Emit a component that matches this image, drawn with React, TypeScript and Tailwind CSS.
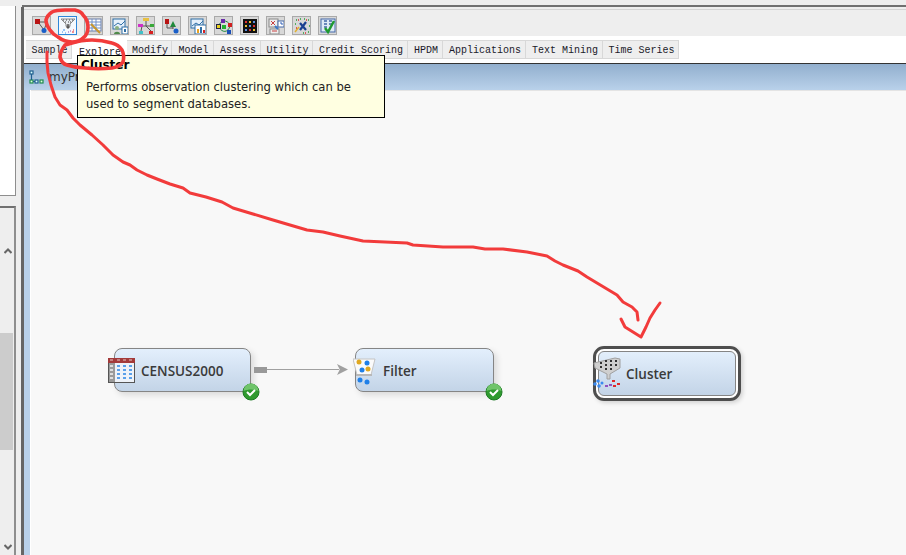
import React from 'react';

const tabs = [
  { label: 'Sample', w: 'w-[46px]' },
  { label: 'Explore', w: 'w-[55px]', active: true },
  { label: 'Modify', w: 'w-[45px]' },
  { label: 'Model', w: 'w-[42px]' },
  { label: 'Assess', w: 'w-[47px]' },
  { label: 'Utility', w: 'w-[52px]' },
  { label: 'Credit Scoring', w: 'w-[95px]' },
  { label: 'HPDM', w: 'w-[35px]' },
  { label: 'Applications', w: 'w-[83px]' },
  { label: 'Text Mining', w: 'w-[77px]' },
  { label: 'Time Series', w: 'w-[76px]' },
];

const toolIcons: React.ReactNode[] = [
  <>
    <path d="M4 4L13 4M4 4L10 12M13 4L10 12" stroke="#555" fill="none" />
    <rect x="1" y="1" width="5" height="5" fill="#b81414" />
    <path d="M11 1l3 3-3 2z" fill="#2a9a2a" />
    <circle cx="10" cy="12.5" r="2.5" fill="#1a5fc8" />
  </>,
  <>
    <path d="M1 1h14l-5 5v2H6V6z" fill="#e8edf2" stroke="#8a8a8a" />
    <path d="M3 2h1M6 2h1M9 2h1M12 2h1M5 4h1M8 4h1M10 4h1" stroke="#444" />
    <path d="M8 6v4" stroke="#555" strokeWidth="1.5" />
    <path d="M5.5 8.5L8 11l2.5-2.5z" fill="#555" />
    <path d="M2 14h1M4 12h1M5 15h1M3 12h1" stroke="#3f8fe8" strokeWidth="1.2" />
    <path d="M8 14h1M10 13h1" stroke="#8a4cc0" strokeWidth="1.2" />
    <path d="M12 14h2M13 12h1" stroke="#e22" strokeWidth="1.2" />
  </>,
  <>
    <rect x="2" y="1" width="13" height="12" fill="#fff" stroke="#6a7fa8" />
    <path d="M2 4h13M2 7h13M2 10h13M6 1v12M10 1v12" stroke="#6f8fc8" />
    <path d="M5 6l9 9" stroke="#c9962b" strokeWidth="2" />
  </>,
  <>
    <rect x="1" y="1" width="12" height="10" fill="#e6f0fa" stroke="#2f6ea5" />
    <path d="M2 8l4-3 3 2 4-4" stroke="#2f6ea5" fill="none" />
    <circle cx="5" cy="10" r="2" fill="#8ab080" />
    <path d="M2 16c0-3 6-3 6 0z" fill="#4f8a4a" />
    <rect x="10" y="9" width="6" height="7" fill="#fff" stroke="#2f6ea5" />
    <rect x="12" y="11" width="2" height="3" fill="#2f6ea5" />
  </>,
  <>
    <path d="M8 3v5M3 8h10M4 8l-1 5M8 8l5 5" stroke="#555" fill="none" />
    <rect x="5" y="0" width="6" height="3" fill="#e8c040" />
    <rect x="0" y="6" width="5" height="3" fill="#d030c8" />
    <rect x="12" y="6" width="4" height="3" fill="#38a838" />
    <rect x="1" y="13" width="4" height="3" fill="#40c0c8" />
    <rect x="11" y="13" width="4" height="3" fill="#d82020" />
  </>,
  <>
    <path d="M3 5v5h6" stroke="#555" fill="none" />
    <rect x="1" y="1" width="4" height="5" fill="#b81414" />
    <path d="M9 3l3 6H6z" fill="#1f8a3a" />
    <path d="M9 8v3" stroke="#555" />
    <circle cx="12" cy="13" r="2.5" fill="#1a5fc8" />
  </>,
  <>
    <rect x="1" y="1" width="12" height="9" fill="#e6f0fa" stroke="#2f6ea5" />
    <path d="M2 8l4-3 3 2 4-4" stroke="#2f6ea5" fill="none" />
    <rect x="5" y="7" width="11" height="9" fill="#fff" stroke="#2f6ea5" />
    <rect x="7" y="11" width="2" height="4" fill="#e8a020" />
    <rect x="10" y="9" width="2" height="6" fill="#2f6ea5" />
    <rect x="13" y="12" width="2" height="3" fill="#d82020" />
  </>,
  <>
    <path d="M3 8C4 2 11 1 14 7M3 9c3 6 9 6 11-1" stroke="#1f8a3a" fill="none" />
    <rect x="0.5" y="6.5" width="4" height="4" fill="#e8d020" stroke="#224" />
    <rect x="5" y="1" width="4" height="4" fill="#6a2ca8" />
    <rect x="6" y="7" width="4" height="4" fill="#22b030" />
    <rect x="12" y="5" width="4" height="4" fill="#d02020" />
    <rect x="11" y="12" width="4" height="4" fill="#1a4fb8" />
  </>,
  <>
    <rect x="1" y="1" width="14" height="14" fill="#111" />
    <path d="M3 3h2v2H3zM11 7h2v2h-2zM7 11h2v2H7z" fill="#e03030" />
    <path d="M7 3h2v2H7zM3 7h2v2H3zM11 11h2v2h-2z" fill="#e8c030" />
    <path d="M11 3h2v2h-2zM7 7h2v2H7zM3 11h2v2H3z" fill="#5a90e0" />
  </>,
  <>
    <rect x="1" y="1" width="9" height="8" fill="#eee" stroke="#888" />
    <rect x="10" y="3" width="6" height="6" fill="#fff" stroke="#4468a8" />
    <rect x="2" y="11" width="9" height="5" fill="#eee" stroke="#888" />
    <path d="M3 3l4 4M7 3l-4 4M4 13h5" stroke="#c84040" />
    <path d="M12 5h2v2" stroke="#2f5fb8" fill="none" />
    <path d="M7 8l3 3" stroke="#3a78c8" strokeWidth="2" />
  </>,
  <>
    <path d="M6 5l6 7M12 4l-6 8" stroke="#1a3f90" strokeWidth="2.2" />
    <path d="M1 14l4-5" stroke="#e0b030" strokeWidth="1.5" />
    <path d="M2 2h1M6 1h1M10 1h1M14 2h1M1 6h1M15 8h1M14 14h1M9 15h1" stroke="#2a9a3a" strokeWidth="1.5" />
    <path d="M4 2h1M12 2h1M2 10h1M11 15h1" stroke="#d83030" strokeWidth="1.5" />
  </>,
  <>
    <rect x="1" y="1" width="14" height="13" fill="#dfe9f6" stroke="#4468a8" />
    <path d="M4 3h3M9 3h3M4 6h3M9 6h3M4 9h3" stroke="#4468a8" strokeWidth="1.5" />
    <path d="M5 10l3 4 6-11" stroke="#1f9a30" strokeWidth="2.5" fill="none" />
  </>,
];

function ToolButton({ icon, selected }: { icon: React.ReactNode; selected?: boolean }) {
  return (
    <div
      className={
        selected
          ? 'w-[19px] h-[19px] border border-[#2f86d8] bg-[#f4f9fe] flex items-center justify-center'
          : 'w-[19px] h-[19px] border border-[#a9a9a9] bg-[#d8d8d8] flex items-center justify-center'
      }
    >
      <svg width="16" height="16" viewBox="0 0 16 16">
        {icon}
      </svg>
    </div>
  );
}

function CheckBadge() {
  return (
    <svg width="18" height="18" viewBox="0 0 18 18" className="absolute right-[-10px] bottom-[-10px]">
      <circle cx="9" cy="9" r="8" fill="#2f9a2f" stroke="#1d7a24" />
      <path d="M1.5 8A7.5 7.5 0 0 1 16.5 8C12 6 6 6 1.5 8z" fill="#6fc46a" />
      <path d="M5 9l3 3 5-5" stroke="#fff" strokeWidth="2" fill="none" />
    </svg>
  );
}

function CensusIcon() {
  return (
    <svg width="28" height="26" viewBox="0 0 28 26" className="absolute left-[-7px] top-[9px]">
      <rect x="0.5" y="0.5" width="26" height="24" fill="#eef2f8" stroke="#555" />
      <rect x="0" y="0" width="27" height="5" fill="#a33a3a" />
      <path d="M2 2h3M9 2h3M15 2h3M21 2h3" stroke="#e8c8c8" />
      <rect x="1" y="5" width="6" height="19" fill="#9a9a9a" />
      <path d="M2 8h3M2 12h3M2 16h3M2 20h3" stroke="#ddd" strokeWidth="2" />
      <path d="M9 8h3M15 8h3M21 8h3M9 12h3M15 12h3M21 12h3M9 16h3M15 16h3M21 16h3M9 20h3M15 20h3M21 20h3" stroke="#5aa0ea" strokeWidth="2" />
    </svg>
  );
}

function FilterIcon() {
  return (
    <svg width="24" height="28" viewBox="0 0 24 28" className="absolute left-[-3px] top-[9px]">
      <path d="M0 1h22l-4 16H4z" fill="#fbfbfb" stroke="#c4c4c4" />
      <rect x="3" y="16" width="16" height="2" fill="#b8b8b8" />
      <circle cx="6" cy="4" r="2.5" fill="#e0a820" />
      <circle cx="14" cy="5" r="2.5" fill="#2080e8" />
      <circle cx="9" cy="12" r="2.5" fill="#2080e8" />
      <circle cx="15" cy="11" r="2.5" fill="#e0a820" />
      <circle cx="7" cy="22" r="2.5" fill="#2080e8" />
      <circle cx="14" cy="24" r="2.5" fill="#2080e8" />
    </svg>
  );
}

function ClusterIcon() {
  return (
    <svg width="32" height="34" viewBox="0 0 32 34" className="absolute left-[-6px] top-[4px]">
      <path d="M1 7L22 2l5 1v9l-10 6v5h-3v-5L2 12z" fill="#cfcfcf" stroke="#a0a0a0" />
      <path d="M7 7h2M12 5h2M17 5h2M22 5h2M7 11h2M12 9h2M17 9h2M22 9h2M12 13h2M17 13h2" stroke="#333" strokeWidth="2" />
      <circle cx="2" cy="28" r="1.8" fill="#3a8af0" />
      <circle cx="5" cy="25" r="1.8" fill="#3a8af0" />
      <circle cx="6" cy="30" r="1.8" fill="#3a8af0" />
      <circle cx="9" cy="27" r="1.5" fill="#3a8af0" />
      <path d="M12 30h3M16 29h3" stroke="#9050c0" strokeWidth="2" />
      <path d="M19 25h3M24 28h3M20 30h3" stroke="#e02828" strokeWidth="2" />
    </svg>
  );
}

export default function App() {
  return (
    <div className="relative w-[906px] h-[555px] overflow-hidden flex bg-[#eeeeee] font-['DejaVu_Sans',sans-serif]">
      {/* left docked panels, cut off by the crop */}
      <aside className="w-[21px] shrink-0 pr-[5px] pt-[6px] flex flex-col">
        <div className="h-[190px] bg-white border-r border-b border-[#8e8e8e]" />
        <div className="mt-[10px] flex-1 border-t-2 border-r-2 border-t-[#707070] border-r-[#8e8e8e] flex flex-col pr-px">
          <div className="h-[125px] flex items-end justify-end pr-[1px] pb-[79px]">
            <svg width="8" height="6" viewBox="0 0 8 6">
              <path d="M0.5 5L4 1.5 7.5 5" stroke="#666" strokeWidth="2" fill="none" />
            </svg>
          </div>
          <div className="h-[117px] bg-[#cccccc]" />
          <div className="flex-1 flex items-end justify-end pr-[1px] pb-[5px]">
            <svg width="8" height="6" viewBox="0 0 8 6">
              <path d="M0.5 1L4 4.5 7.5 1" stroke="#666" strokeWidth="2" fill="none" />
            </svg>
          </div>
        </div>
      </aside>

      <main className="flex-1 flex flex-col pt-[5px] min-w-0">
        <div className="h-[2px] bg-[#707070] ml-px" />
        <div className="flex-1 flex flex-col border-l-[3px] border-l-[#666666] min-h-0">
          <div className="mt-[2px] h-[27px] shrink-0 border-t border-[#d4d4d4] flex items-start pl-[8px] pt-[6px] gap-[7px]">
            {toolIcons.map((icon, i) => (
              <ToolButton key={i} icon={icon} selected={i === 1} />
            ))}
          </div>
          <div className="h-[28px] shrink-0 bg-white pt-[4px] border-b border-[#333333]">
            <div className="flex h-[19px] bg-[#eeeeee] w-max font-['Liberation_Mono',monospace] text-[10px] text-[#1a1a2a] ml-[2px]">
              {tabs.map((t) => (
                <div
                  key={t.label}
                  className={
                    t.active
                      ? `${t.w} h-[23px] bg-white flex items-center justify-center pt-[2px] pl-px`
                      : `${t.w} border border-l-0 border-[#d8d8d8] flex items-center justify-center pt-[1px] pl-[2px]`
                  }
                >
                  {t.label}
                </div>
              ))}
            </div>
          </div>
          <div className="h-[26px] shrink-0 bg-gradient-to-b from-[#92afce] to-[#b9d1ea] flex items-center pl-[5px] gap-[5px] text-[12px] text-[#333]">
            <svg width="15" height="15" viewBox="0 0 15 15" fill="none" strokeWidth="1.2" stroke="#1f5f8f">
              <rect x="1" y="1" width="3" height="3" fill="#dff" />
              <rect x="1" y="10" width="3" height="3" stroke="#1f8a4f" fill="#dfd" />
              <rect x="6" y="10" width="3" height="3" fill="#dff" />
              <rect x="11" y="10" width="3" height="3" stroke="#1f8a4f" fill="#dfd" />
              <path d="M2.5 4v6M4 11.5h2" />
            </svg>
            <span>myPr</span>
          </div>
          <div className="flex-1 flex min-h-0">
            <div className="w-[7px] bg-[#b9d1ea] border-r border-white" />
            <div className="relative flex-1 bg-[#f8f8f8] border-t border-[#e4e4e4]">
              {/* nodes sit on a free canvas */}
              <div className="absolute left-[83px] top-[257px] w-[137px] h-[44px] rounded-[8px] border border-[#858585] bg-gradient-to-b from-[#e3effc] to-[#c3d4e7] shadow-[3px_3px_6px_rgba(0,0,0,0.12)] flex items-center pl-[26px] pt-[2px] text-[13.5px] font-semibold text-[#3a3a3a]">
                <CensusIcon />
                <span className="font-['Open_Sans',sans-serif]">CENSUS2000</span>
                <CheckBadge />
              </div>
              <div className="absolute left-[223px] top-[276px] w-[13px] h-[6px] bg-[#999999]" />
              <div className="absolute left-[236px] top-[278px] w-[72px] h-px bg-[#a0a0a0]" />
              <svg width="11" height="11" viewBox="0 0 12 12" className="absolute left-[306px] top-[273px]">
                <path d="M0 0L12 6 0 12 3 6z" fill="#a0a0a0" />
              </svg>
              <div className="absolute left-[324px] top-[257px] w-[139px] h-[44px] rounded-[8px] border border-[#858585] bg-gradient-to-b from-[#e3effc] to-[#c3d4e7] shadow-[3px_3px_6px_rgba(0,0,0,0.12)] flex items-center pl-[27px] pt-[2px] text-[13.5px] font-semibold text-[#3a3a3a]">
                <FilterIcon />
                <span className="font-['Open_Sans',sans-serif]">Filter</span>
                <CheckBadge />
              </div>
              <div className="absolute left-[562px] top-[255px] w-[148px] h-[55px] rounded-[11px] border-[3px] border-[#4e4e4e] bg-white p-[2px] shadow-[2px_2px_4px_rgba(0,0,0,0.15)]">
                <div className="relative h-full rounded-[6px] border border-[#858585] bg-gradient-to-b from-[#e3effc] to-[#c3d4e7] flex items-center pl-[27px] pt-[2px] text-[13.5px] font-semibold text-[#3a3a3a]">
                  <ClusterIcon />
                  <span className="font-['Open_Sans',sans-serif]">Cluster</span>
                </div>
              </div>
            </div>
          </div>
        </div>
      </main>

      {/* tooltip over the workspace */}
      <div className="absolute left-[77px] top-[55px] w-[308px] h-[63px] bg-[#ffffe1] border border-black pl-[8px] pt-[1px] text-[11.6px] leading-[17px] text-[#222]">
        <div className="font-bold text-black -ml-[5px] mb-[5px] text-[12px]">Cluster</div>
        <div>Performs observation clustering which can be</div>
        <div>used to segment databases.</div>
      </div>

      {/* hand-drawn red annotation */}
      <svg width="906" height="555" viewBox="0 0 906 555" className="absolute inset-0 pointer-events-none" fill="none" stroke="#f23b3b" strokeLinecap="round" strokeLinejoin="round">
        <path strokeWidth="3.6" d="M75 10C80 11 82 13 83 15C87 19 88 23 88 27C88 32 86 36 83 38C80 41 76 42 72 42C66 42 62 40 58 37C54 35 52 33 50 30C47 26 46 23 46 20C47 16 49 14 52 12C56 10 60 10 65 10L75 10" />
        <path strokeWidth="3.6" d="M72 43L65 45C62 49 60 53 60 57C61 61 63 64 67 65C73 67 79 68 85 68C94 69 103 69 112 68C118 67 121 65 123 62C124 58 124 54 122 50C120 47 116 44 112 43C105 41 99 40 92 40C85 40 78 41 72 43" />
        <polyline
          strokeWidth="3"
          points="47,52 47,62 48,73 51,85 55,97 60,105 67,110 73,118 80,125 92,135 103,145 113,155 123,162 130,165 137,170 147,175 157,179 170,184 183,188 190,193 206,197 222,202 233,208 253,214 273,220 290,225 307,230 323,232 340,236 363,241 385,242 407,243 413,245 428,246 443,247 473,247 485,249 503,249 527,252 547,256 555,261 563,265 578,271 587,277 597,283 607,289 617,295 623,302 632,307 637,312 638,320"
        />
        <polyline strokeWidth="3" points="660,303 655,310 650,318 646,327 641,337 633,332 625,327 621,319" />
      </svg>
    </div>
  );
}
